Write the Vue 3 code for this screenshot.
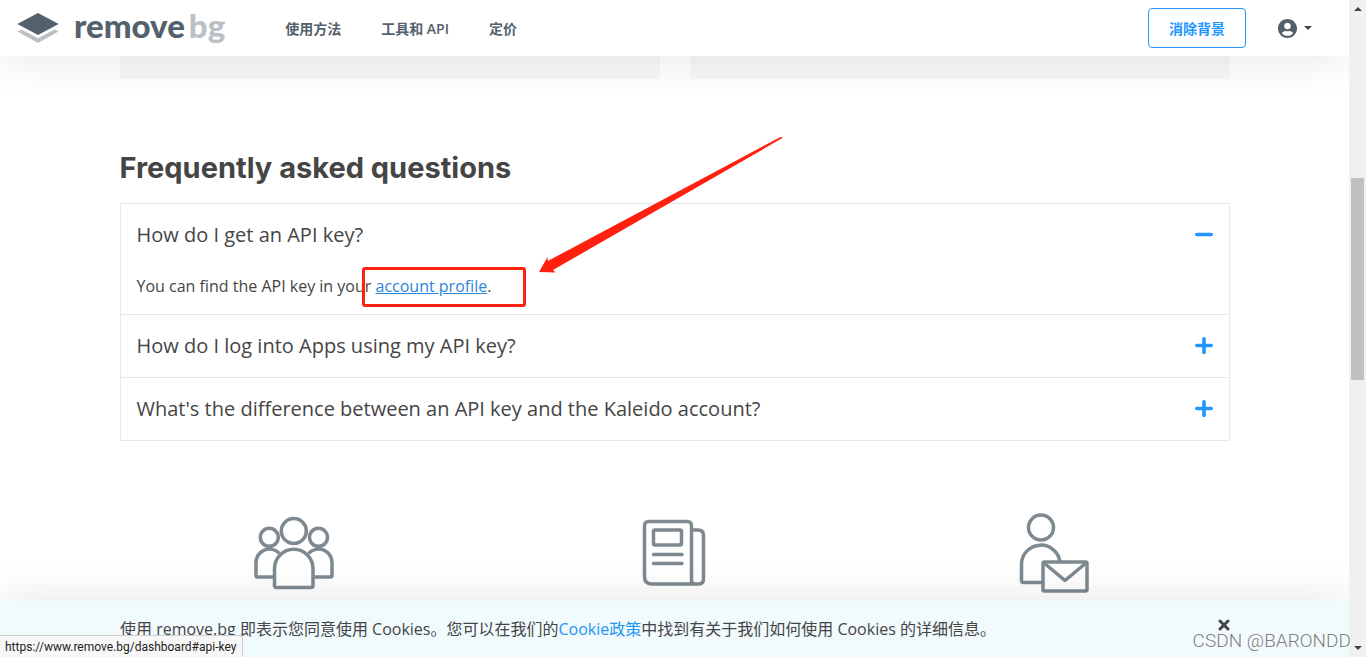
<script setup>
import { ref } from 'vue'

const nav = ['使用方法', '工具和 API', '定价']
const faqs = [
  { id: 'key', question: 'How do I get an API key?' },
  { id: 'apps', question: 'How do I log into Apps using my API key?' },
  { id: 'kaleido', question: "What's the difference between an API key and the Kaleido account?" },
]
const open = ref('key')
const cookies = ref(true)
const toggle = (id) => {
  open.value = open.value === id ? '' : id
}
</script>

<template>
  <div class="window">
    <div class="page">
      <header class="topbar">
        <a class="logo" href="#" aria-label="removebg">
          <svg class="logo-mark" viewBox="0 0 42 30" aria-hidden="true">
            <path fill="#bac0c4" d="M0.500 18.500 4.500 16.500 21 25.200 37.500 16.500 41.500 18.500 21 30Z" />
            <path fill="#54616c" d="M21 0 41.700 11 21 22 0.300 11Z" />
          </svg>
          <span class="logo-text">remove<span class="logo-bg">bg</span></span>
        </a>
        <nav class="nav">
          <a v-for="item in nav" :key="item" href="#">{{ item }}</a>
        </nav>
        <button class="cta" type="button">消除背景</button>
        <button class="account" type="button" aria-label="Account">
          <svg width="19" height="19" viewBox="0 0 496 496" aria-hidden="true">
            <path fill="#54616c" d="M248 0C111 0 0 111 0 248s111 248 248 248 248-111 248-248S385 0 248 0zm0 96c48.600 0 88 39.400 88 88s-39.400 88-88 88-88-39.400-88-88 39.400-88 88-88zm0 344c-58.700 0-111.300-26.600-146.500-68.200 18.800-35.400 55.600-59.800 98.500-59.800 2.400 0 4.800.4 7.100 1.100 13 4.200 26.600 6.900 40.900 6.900s28-2.700 40.900-6.900c2.300-.7 4.700-1.100 7.100-1.100 42.900 0 79.700 24.400 98.500 59.800C359.300 413.400 306.700 440 248 440z" />
          </svg>
          <svg width="8" height="4" viewBox="0 0 8 4" aria-hidden="true"><path fill="#444" d="M0 0H8L4 4Z" /></svg>
        </button>
      </header>

      <main class="content">
        <div class="cards"><div class="card"></div><div class="card"></div></div>

        <section class="faq">
          <h2>Frequently asked questions</h2>
          <div class="accordion">
            <div v-for="faq in faqs" :key="faq.id" class="item">
              <button class="question" type="button" :aria-expanded="open === faq.id" @click="toggle(faq.id)">
                <span>{{ faq.question }}</span>
                <svg width="18" height="18" viewBox="0 0 18 18" aria-hidden="true">
                  <path d="M1.800 8.500H16.200" />
                  <path v-if="open !== faq.id" d="M9 1.800V15.500" />
                </svg>
              </button>
              <p v-if="faq.id === 'key' && open === 'key'" class="answer">
                You can find the API key in your <a href="#api-key">account profile</a>.
              </p>
            </div>
          </div>
          <div class="mark-box"></div>
          <svg class="mark-arrow" width="246" height="138" viewBox="0 0 246 138" aria-hidden="true">
            <path fill="#ff2010" d="M1 136 9.500 121 9.800 125 242.500 1H244.500L243.500 2.600 15 134 17.500 136.500Z" />
          </svg>
        </section>

        <div class="features">
          <div class="feature">
            <svg width="80" height="74" viewBox="0 0 80 74" aria-hidden="true">
              <circle cx="39.800" cy="15" r="12.500" />
              <circle cx="15.300" cy="21.300" r="9" />
              <circle cx="64.500" cy="21.300" r="9" />
              <path d="M19.500 61H3.500Q2 61 2 59.500V47.500A13.500 13.500 0 0 1 25.500 37.500M60.500 61H76.500Q78 61 78 59.500V47.500A13.500 13.500 0 0 0 54.500 37.500" />
              <path d="M20.500 52.500A19.200 19.200 0 0 1 59 52.500V69.500Q59 71.500 57 71.500H22.500Q20.500 71.500 20.500 69.500Z" />
            </svg>
          </div>
          <div class="feature">
            <svg width="64" height="72" viewBox="0 0 64 72" aria-hidden="true">
              <path d="M7 4.500H45Q49.500 4.500 49.500 9V63.500Q49.500 67 53 67H10Q2.500 67 2.500 59.500V9Q2.500 4.500 7 4.500Z" />
              <path d="M49.500 13H56Q61.500 13 61.500 18.500V62Q61.500 67 56.500 67H51" />
              <rect x="11.500" y="13" width="28" height="15" rx="1.500" />
              <path stroke-linecap="round" d="M11.500 37.500H40M11.500 46.500H40" />
            </svg>
          </div>
          <div class="feature">
            <svg width="70" height="82" viewBox="0 0 70 82" aria-hidden="true">
              <circle cx="22" cy="15.500" r="12.500" />
              <path d="M23 70.500H4.500Q2.500 70.500 2.500 68.500V52A19.300 19.300 0 0 1 41 50.500" />
              <rect x="24" y="50" width="44" height="29" rx="1.500" />
              <path stroke-linejoin="round" d="M25 51 46 68.500 67 51" />
            </svg>
          </div>
        </div>
      </main>

      <div v-if="cookies" class="cookies">
        <p>使用 remove.bg 即表示您同意使用 Cookies。您可以在我们的<a href="#">Cookie政策</a>中找到有关于我们如何使用 Cookies 的详细信息。</p>
        <button type="button" aria-label="Close" @click="cookies = false">
          <svg width="12" height="12" viewBox="0 0 12 12" aria-hidden="true"><path d="M2 2 10 10M10 2 2 10" /></svg>
        </button>
      </div>
      <div class="status">https://www.remove.bg/dashboard#api-key</div>
    </div>

    <div class="scrollbar" aria-hidden="true">
      <svg width="8" height="4" viewBox="0 0 8 4"><path d="M0 4H8L4 0Z" /></svg>
      <div class="track"><div class="before"></div><div class="thumb"></div><div class="after"></div></div>
      <svg width="8" height="4" viewBox="0 0 8 4"><path d="M0 0H8L4 4Z" /></svg>
    </div>
    <div class="watermark">CSDN @BARONDD</div>
  </div>
</template>

<style>
body {
  margin: 0;
  background: #fff;
}
</style>

<style scoped>
* {
  box-sizing: border-box;
}
.window {
  position: relative;
  display: flex;
  height: 100vh;
  overflow: hidden;
  font-family: "Open Sans", "Noto Sans CJK SC", sans-serif;
  font-size: 16px;
  line-height: 24px;
  color: #454545;
}
button {
  font: inherit;
  color: inherit;
  background: none;
  border: 0;
  padding: 0;
  cursor: pointer;
}
.page {
  position: relative;
  flex: 1;
  min-width: 0;
  overflow: hidden;
}
.topbar {
  position: relative;
  z-index: 1;
  display: flex;
  align-items: center;
  height: 56px;
  padding: 0 37px 0 17px;
  background: #fff;
  box-shadow: 0 8px 40px rgba(0, 0, 0, 0.08);
}
.logo {
  display: flex;
  align-items: center;
  gap: 15px;
  text-decoration: none;
}
.logo-mark {
  width: 42px;
  height: 30px;
}
.logo-text {
  padding-bottom: 6px;
  font-family: Lato, sans-serif;
  font-size: 33px;
  font-weight: 900;
  line-height: 40px;
  color: #54616c;
}
.logo-bg {
  padding-left: 4px;
  color: #bac0c4;
}
.nav {
  display: flex;
  gap: 40px;
  margin: 2px auto 0 60px;
  font-size: 14px;
}
.nav a {
  color: #54616c;
  font-weight: 600;
  text-decoration: none;
}
.cta {
  height: 40px;
  padding: 2px 20px 0;
  border: 1px solid #2196ff;
  border-radius: 4px;
  color: #2196ff;
  font-size: 14px;
  font-weight: 700;
}
.account {
  display: flex;
  align-items: center;
  gap: 7px;
  margin-left: 32px;
}
.content {
  width: 1110px;
  max-width: 90%;
  margin: 0 auto;
}
.cards {
  display: grid;
  grid-template-columns: 1fr 1fr;
  gap: 30px;
}
.card {
  height: 23px;
  background: #f6f7f9;
}
.faq {
  position: relative;
  padding-top: 69px;
}
h2 {
  margin: 0 0 15px;
  font-family: Inter, sans-serif;
  font-size: 29px;
  font-weight: 700;
  line-height: 40px;
}
.accordion {
  border: 1px solid #e8e8e8;
}
.item + .item {
  border-top: 1px solid #e8e8e8;
}
.question {
  display: flex;
  justify-content: space-between;
  align-items: center;
  width: 100%;
  height: 62px;
  padding: 0 16px;
  font-size: 20px;
  text-align: left;
}
.question svg {
  fill: none;
  stroke: #2196ff;
  stroke-width: 3.600;
  stroke-linecap: round;
}
.answer {
  margin: 0;
  padding: 8px 16px 16px;
}
.answer a {
  color: #2c85d8;
}
.mark-box {
  position: absolute;
  left: 242px;
  top: 188px;
  width: 164px;
  height: 40px;
  border: 3px solid #ff2010;
  border-radius: 3px;
}
.mark-arrow {
  position: absolute;
  left: 418px;
  top: 57px;
}
.features {
  display: grid;
  grid-template-columns: repeat(3, 1fr);
  margin: 72px -14px 0 -16px;
}
.feature {
  display: flex;
  justify-content: center;
  align-items: center;
  height: 80px;
}
.feature svg {
  fill: none;
  stroke: #7e8990;
  stroke-width: 3.500;
}
.cookies {
  position: absolute;
  left: 0;
  right: 0;
  bottom: 0;
  display: flex;
  justify-content: space-between;
  align-items: center;
  height: 56px;
  padding: 0 119px 0 120px;
  background: #f1fafc;
  box-shadow: 0 -8px 40px rgba(0, 0, 0, 0.08);
}
.cookies p {
  margin: 0;
}
.cookies a {
  color: #2196f3;
  text-decoration: none;
}
.cookies button {
  display: flex;
  align-items: center;
  height: 12px;
  margin-bottom: 8px;
}
.cookies button svg {
  stroke: #444;
  stroke-width: 3;
  stroke-linecap: round;
}
.status {
  position: absolute;
  left: 0;
  bottom: 0;
  height: 22px;
  padding: 0 6px 0 5px;
  border: solid #d0d0d0;
  border-width: 1px 1px 0 0;
  border-radius: 0 3px 0 0;
  background: #f7f7f7;
  color: #222;
  font-family: Roboto, sans-serif;
  font-size: 12px;
  line-height: 22px;
}
.scrollbar {
  display: flex;
  flex-direction: column;
  align-items: center;
  width: 17px;
  padding: 7px 0;
  background: #f0f0f0;
}
.scrollbar svg {
  fill: #444;
}
.track {
  display: flex;
  flex-direction: column;
  flex: 1;
  width: 13px;
  padding: 6px 0;
}
.before {
  flex: 161;
}
.thumb {
  flex: 202;
  background: #c1c1c1;
}
.after {
  flex: 260;
}
.watermark {
  position: absolute;
  right: 15px;
  bottom: 4px;
  font-family: Roboto, sans-serif;
  font-weight: 300;
  font-size: 19px;
  color: #7c8082;
  text-shadow: 1px 1px 0 #fff;
}
</style>
